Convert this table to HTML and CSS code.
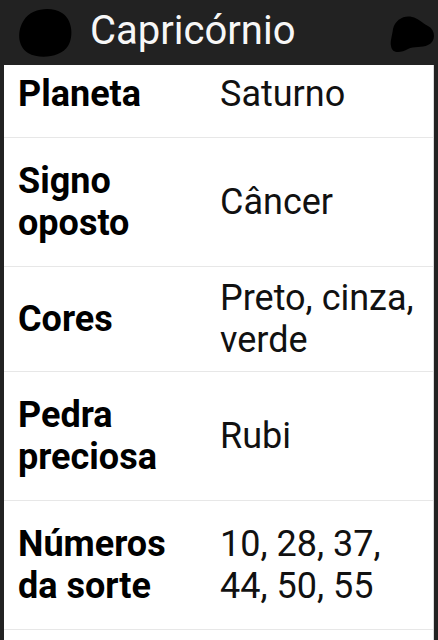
FILE: index.html
```
<!DOCTYPE html>
<html lang="pt">
<head>
<meta charset="utf-8">
<title>Capricórnio</title>
<link rel="stylesheet" href="styles.css">
</head>
<body>
<header class="toolbar">
  <svg class="blob blob-left" viewBox="0 0 80 64" width="80" height="64" aria-hidden="true">
    <path d="M24 20 C31 8, 52 6, 62 13 C72 19, 74 36, 68 46 C61 57, 40 60, 28 53 C17 46, 17 30, 24 20 Z" fill="#000"/>
  </svg>
  <h1 class="title">Capricórnio</h1>
  <div class="spacer"></div>
  <svg class="blob blob-right" viewBox="390 0 48 64" width="48" height="64" aria-hidden="true">
    <path d="M393 29 C395 20, 404 15, 412 17 C418 18, 422 23, 428 26 C436 30, 436 42, 428 45 C422 48, 414 46, 408 49 C401 53, 392 54, 391 46 C390 41, 392 37, 393 29 Z" fill="#000"/>
  </svg>
</header>
<main class="panel">
  <div class="table">
    <div class="row">
      <div class="label">Planeta</div>
      <div class="value">Saturno</div>
    </div>
    <div class="row">
      <div class="label">Signo oposto</div>
      <div class="value">Câncer</div>
    </div>
    <div class="row">
      <div class="label">Cores</div>
      <div class="value">Preto, cinza, verde</div>
    </div>
    <div class="row">
      <div class="label">Pedra preciosa</div>
      <div class="value">Rubi</div>
    </div>
    <div class="row">
      <div class="label">Números da sorte</div>
      <div class="value">10, 28, 37, 44, 50, 55</div>
    </div>
  </div>
</main>
</body>
</html>
```
FILE: styles.css
```
html, body {
  margin: 0;
  padding: 0;
}
body {
  background: #222222;
  height: 640px;
  overflow: hidden;
  font-family: Roboto, "Noto Sans", "Liberation Sans", sans-serif;
}
.toolbar {
  height: 64px;
  display: flex;
  align-items: center;
  background: #222222;
}
.blob {
  display: block;
  flex: none;
}
.title {
  margin: 0 0 0 10px;
  padding-bottom: 4px;
  font-size: 40px;
  font-weight: 400;
  line-height: 47px;
  color: #f7f7f7;
}
.spacer {
  flex: 1;
}
.panel {
  margin: 1px 4px 0;
  height: 575px;
  background: #ffffff;
  overflow: hidden;
  border-right: 1px solid #d9d9d9;
  box-sizing: border-box;
}
.table {
  margin-top: -14px;
}
.row {
  display: grid;
  grid-template-columns: 216px 1fr;
  align-items: center;
  border-bottom: 1px solid #e7e7e7;
}
.label {
  padding: 22px 30px 22px 14px;
  font-size: 36px;
  line-height: 42px;
  font-weight: 700;
  color: #000;
}
.value {
  padding: 10px 14px 10px 0;
  font-size: 36px;
  line-height: 42px;
  font-weight: 400;
  color: #111;
}
```
